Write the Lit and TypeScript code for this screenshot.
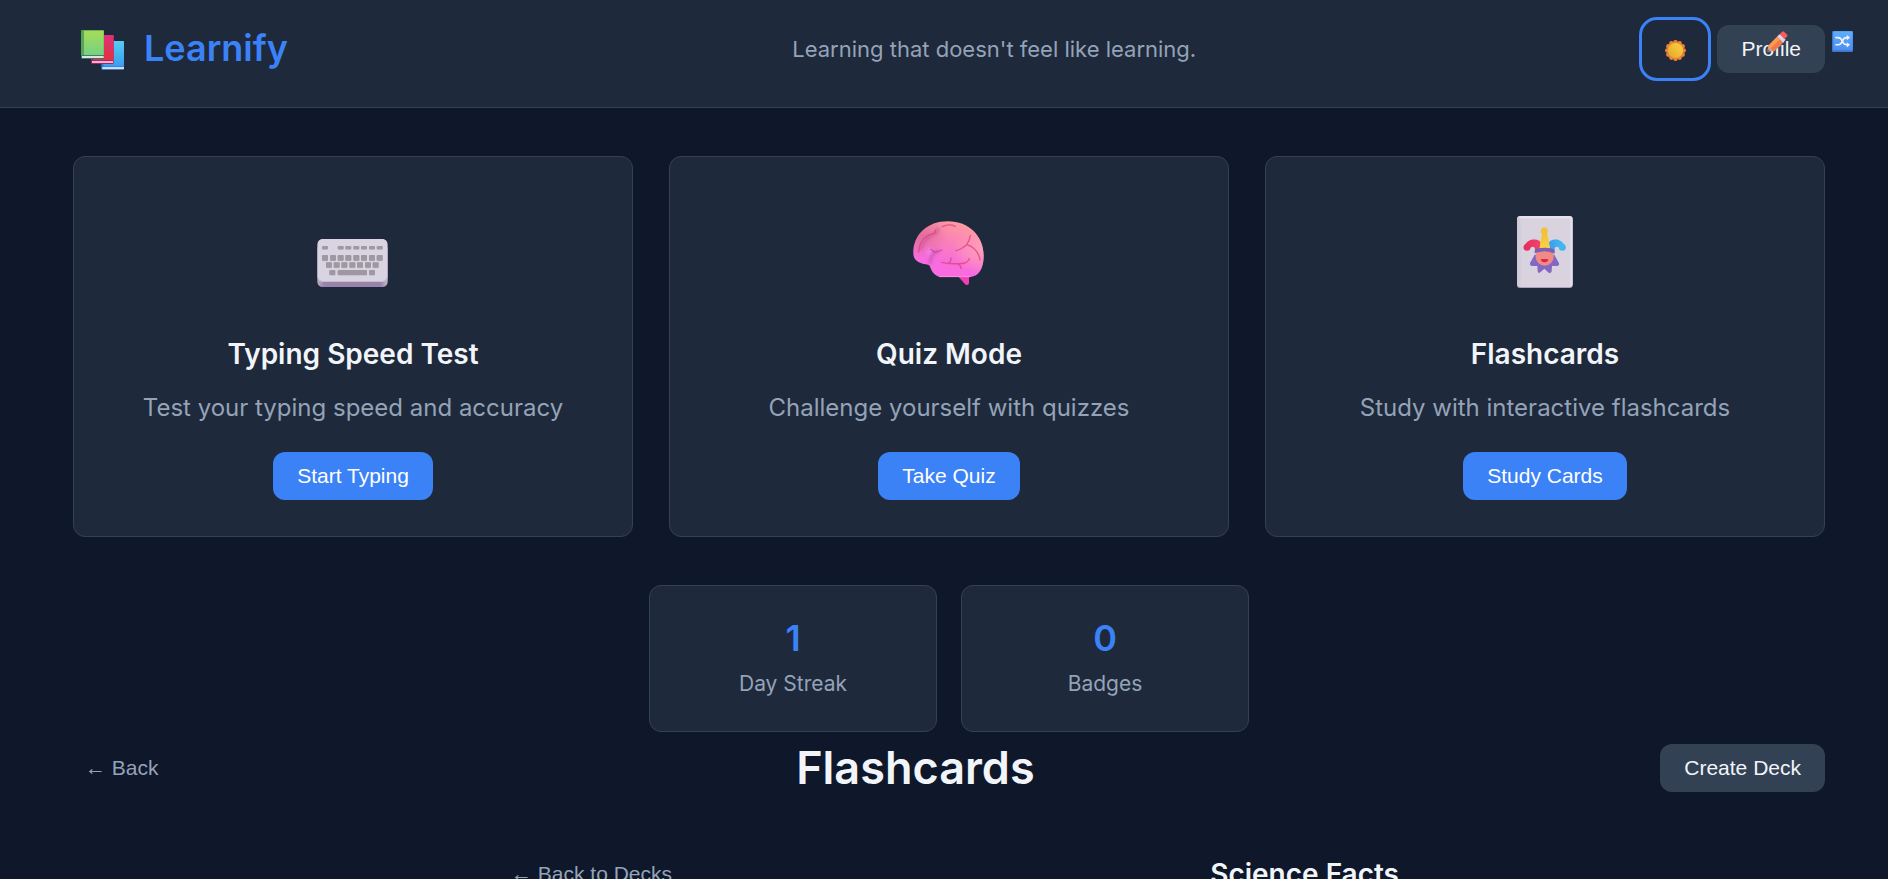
import { LitElement, html, svg, css } from "lit";
import { customElement } from "lit/decorators.js";

const booksIcon = html`
  <svg class="logo-icon" viewBox="63 81 132 132" aria-hidden="true">
    <defs>
      <linearGradient id="book-green" x1="0" y1="0" x2="0" y2="1">
        <stop offset="0" stop-color="#a6dc58" />
        <stop offset="1" stop-color="#76d184" />
      </linearGradient>
      <linearGradient id="book-red" x1="0" y1="0" x2="0" y2="1">
        <stop offset="0" stop-color="#e0307a" />
        <stop offset="1" stop-color="#e2323f" />
      </linearGradient>
      <linearGradient id="book-blue" x1="0" y1="0" x2="0" y2="1">
        <stop offset="0" stop-color="#55cdf2" />
        <stop offset="1" stop-color="#3a9df0" />
      </linearGradient>
    </defs>
    <rect x="124" y="123" width="68" height="87" rx="4" fill="#2f7fd0" />
    <path d="M131 123h58q3 0 3 3v73h-61z" fill="url(#book-blue)" />
    <rect x="127" y="201" width="65" height="6" fill="#dfd3ee" />
    <rect x="93" y="105" width="68" height="87" rx="4" fill="#a81f5e" />
    <path d="M100 105h58q3 0 3 3v73h-61z" fill="url(#book-red)" />
    <rect x="96" y="183" width="63" height="6" fill="#dcb9da" />
    <rect x="63" y="90" width="69" height="87" rx="4" fill="#2c7a60" />
    <path d="M66 90h63q3 0 3 3v73H63V93q0-3 3-3z" fill="#57a554" />
    <path d="M72 92h57q2 0 2 2v71H72z" fill="url(#book-green)" />
    <rect x="66" y="168" width="65" height="6" fill="#dfe2ea" />
  </svg>
`;

const sunPoints = Array.from({ length: 12 }, (_, i) => {
  const a = (i * Math.PI) / 6;
  return [164 + 25 * Math.cos(a), 152 + 25 * Math.sin(a)];
});

const sunIcon = html`
  <svg class="glyph" viewBox="132 120 64 64" aria-hidden="true">
    <defs>
      <linearGradient id="sun-core" x1="1" y1="0" x2="0" y2="1">
        <stop offset="0" stop-color="#ffd53c" />
        <stop offset="1" stop-color="#e0a431" />
      </linearGradient>
    </defs>
    ${sunPoints.map(([x, y]) => svg`<circle cx=${x} cy=${y} r="7" fill="#ee8336" />`)}
    <circle cx="164" cy="152" r="25" fill="#ee8336" />
    <circle cx="164" cy="152" r="23" fill="url(#sun-core)" />
  </svg>
`;

const pencilIcon = html`
  <svg class="glyph" viewBox="440 93 64 64" aria-hidden="true">
    <path d="M440 157l5-22 20 18z" fill="#c9a08f" />
    <path d="M440 157l2-9 6 6z" fill="#6b5a68" />
    <path d="M444 137l27-27 18 18-27 27q-6-1-8-7-8-2-10-11z" fill="#ff9a4a" />
    <path d="M452 145l28-27 9 10-27 27q-6-1-10-10z" fill="#f2774a" />
    <path d="M471 110l8-8 18 18-8 8z" fill="#dcd6ea" />
    <path d="M479 102l7-7q3-3 6 0l9 9q3 3 0 6l-8 8z" fill="#fb5b5b" />
  </svg>
`;

const shuffleIcon = html`
  <svg class="glyph" viewBox="636 93 64 64" aria-hidden="true">
    <defs>
      <linearGradient id="tile" x1="0" y1="0" x2="0" y2="1">
        <stop offset="0" stop-color="#5cb0fb" />
        <stop offset="1" stop-color="#4c8fee" />
      </linearGradient>
    </defs>
    <rect x="636" y="93" width="64" height="64" rx="4" fill="#3f76d2" />
    <rect x="640" y="94" width="59" height="58" rx="3" fill="url(#tile)" />
    <g fill="none" stroke="#f4f1fc" stroke-width="5" stroke-linecap="round" stroke-linejoin="round">
      <path d="M648 113h7q6 0 10 6l5 10q4 6 10 6h3" />
      <path d="M648 135h7q6 0 10-6l5-10q4-6 10-6h3" />
    </g>
    <path d="M681 105l10 8-10 8zM681 127l10 8-10 8z" fill="#f4f1fc" />
  </svg>
`;

const keys = (y: number, h: number, xs: number[], w = 18) =>
  xs.map(
    (x) => svg`
      <rect x=${x} y=${y} width=${w} height=${h + 2} rx="3" fill="#c3bcc8" />
      <rect x=${x} y=${y} width=${w} height=${h} rx="3" fill="#9d98a1" />`
  );

const keyboardIcon = html`
  <svg class="card-icon" viewBox="54 -51 270 345" aria-hidden="true">
    <defs>
      <linearGradient id="kb-base" x1="0" x2="1">
        <stop offset="0" stop-color="#b9adc4" />
        <stop offset="0.1" stop-color="#9884ab" />
        <stop offset="0.9" stop-color="#9884ab" />
        <stop offset="1" stop-color="#c4bbcc" />
      </linearGradient>
    </defs>
    <rect x="82" y="100" width="211" height="131" rx="16" fill="url(#kb-base)" />
    <rect x="82" y="87" width="211" height="129" rx="16" fill="#c6bdd0" />
    <rect x="84" y="87" width="207" height="126" rx="15" fill="#dad3e1" />
    ${keys(108, 10, [96, 143, 166, 190, 213, 237, 260])}
    ${keys(135, 17, [96, 120, 143, 166, 190, 213, 237, 260])}
    ${keys(157, 16, [108, 131, 154, 178, 201, 225, 248])}
    ${keys(180, 15, [118, 237])} ${keys(180, 15, [143], 88)}
  </svg>
`;

const brainIcon = html`
  <svg class="card-icon" viewBox="42 -21 270 345" aria-hidden="true">
    <defs>
      <linearGradient id="brain-fill" x1="0.75" y1="0" x2="0.4" y2="1">
        <stop offset="0" stop-color="#ff9f9c" />
        <stop offset="0.35" stop-color="#fb84b4" />
        <stop offset="0.75" stop-color="#f76cdc" />
        <stop offset="1" stop-color="#fb6ae2" />
      </linearGradient>
      <radialGradient id="brain-shade" cx="0.1" cy="0.25" r="0.4">
        <stop offset="0" stop-color="#d25f82" stop-opacity="0.6" />
        <stop offset="1" stop-color="#d25f82" stop-opacity="0" />
      </radialGradient>
      <radialGradient id="brain-light" cx="1" cy="0.5" r="0.45">
        <stop offset="0" stop-color="#ffa0bd" />
        <stop offset="1" stop-color="#ffa0bd" stop-opacity="0" />
      </radialGradient>
      <filter id="soft" x="-30%" y="-30%" width="160%" height="160%">
        <feGaussianBlur stdDeviation="4" />
      </filter>
    </defs>
    <path d="M204 229h33v20q0 6-6 6-4 0-7-4z" fill="#f43fb4" />
    ${["brain-fill", "brain-shade", "brain-light"].map(
      (fill) => svg`
        <path
          d="M70 159C70 104 112 64 174 64C237 64 281 108 281 168C281 206 266 231 238 231H156C137 231 126 218 119 197C113 192 104 194 94 190C78 184 70 175 70 159Z"
          fill="url(#${fill})"
        />`
    )}
    <g fill="none" stroke-linecap="round" filter="url(#soft)">
      <path d="M92 148q7-36 45-48q7-5 6-14" stroke="#b94f93" stroke-width="9" opacity="0.55" />
      <path d="M120 188q2-26 24-34" stroke="#bd4fa6" stroke-width="10" opacity="0.6" />
      <path d="M115 160q0-8 5-12" stroke="#ea8cff" stroke-width="9" opacity="0.8" />
    </g>
    <g fill="none" stroke="#e2497f" stroke-width="4" stroke-linecap="round" opacity="0.85">
      <path d="M86 156C88 125 105 105 131 101Q138 97 135 90" />
      <path d="M157 80Q176 70 196 79" />
      <path d="M241 106Q238 124 230 134Q212 149 197 152M230 134Q264 144 270 180" />
      <path d="M122 148Q130 150 132 157M130 155Q142 157 156 150" stroke="#d0469c" />
      <path d="M155 187Q172 192 200 191Q232 193 238 176M183 174Q184 184 176 189M205 192Q214 198 213 206" />
    </g>
    <path d="M148 230H242" stroke="#ffa3e8" stroke-width="2" />
  </svg>
`;

const jokerIcon = html`
  <svg class="card-icon" viewBox="30 -21 270 345" aria-hidden="true">
    <defs>
      <linearGradient id="hat-red" x1="0" x2="1">
        <stop offset="0" stop-color="#e8305f" />
        <stop offset="1" stop-color="#f0456c" />
      </linearGradient>
      <linearGradient id="hat-blue" x1="0" x2="1">
        <stop offset="0" stop-color="#3f9be6" />
        <stop offset="1" stop-color="#43bdf5" />
      </linearGradient>
      <linearGradient id="hat-yellow" x1="0" y1="0" x2="0" y2="1">
        <stop offset="0" stop-color="#f2bd32" />
        <stop offset="1" stop-color="#fbd648" />
      </linearGradient>
      <linearGradient id="card-face" x1="0" x2="1">
        <stop offset="0" stop-color="#cdc8d4" />
        <stop offset="0.1" stop-color="#d9d3e0" />
        <stop offset="0.94" stop-color="#d9d3e0" />
        <stop offset="1" stop-color="#ece7f1" />
      </linearGradient>
    </defs>
    <rect x="81" y="49" width="167" height="215" rx="9" fill="#b19fbf" />
    <rect x="81" y="48" width="167" height="213" rx="9" fill="url(#card-face)" />
    <rect x="87" y="49" width="155" height="6" rx="3" fill="#e8e3ed" />
    <path
      d="M134 164L120 189Q119 198 127 198H142L143 214Q145 222 151 217L163 206L176 218Q183 222 185 214L186 198H200Q209 198 207 190L193 164Z"
      fill="#8467c0"
    />
    <path d="M105 136C110 121 128 116 143 120Q152 123 153 130L147 154H135Q137 132 117 145Z" fill="url(#hat-red)" />
    <circle cx="111" cy="142" r="10.500" fill="#e5325f" />
    <path d="M223 136C218 121 200 116 187 120Q177 123 177 130L181 154H194Q192 132 211 145Z" fill="url(#hat-blue)" />
    <circle cx="217" cy="142" r="10.500" fill="#41b6f3" />
    <path d="M158 97H170Q177 120 180 150H148Q151 120 158 97Z" fill="url(#hat-yellow)" />
    <circle cx="163" cy="93" r="10.500" fill="#f3c136" />
    <circle cx="164" cy="170" r="27" fill="#ef8a86" />
    <path d="M134 160V151Q134 144 164 143Q193 144 194 151V161Q180 155 164 154Q147 155 134 160Z" fill="#7d5fb5" />
    <path d="M152 178Q163 176 175 178Q174 187 164 187Q154 187 152 178Z" fill="#dc2347" />
  </svg>
`;

const modes = [
  { icon: keyboardIcon, title: "Typing Speed Test", text: "Test your typing speed and accuracy", action: "Start Typing" },
  { icon: brainIcon, title: "Quiz Mode", text: "Challenge yourself with quizzes", action: "Take Quiz" },
  { icon: jokerIcon, title: "Flashcards", text: "Study with interactive flashcards", action: "Study Cards" },
];

const stats = [
  { value: 1, label: "Day Streak" },
  { value: 0, label: "Badges" },
];

@customElement("app-root")
export class AppRoot extends LitElement {
  static styles = css`
    :host {
      display: block;
      height: 100vh;
      overflow: hidden;
      background: #0f172a;
      color: #f1f5f9;
      font-family: Inter, "Noto Sans", sans-serif;
      font-size: 24px;
    }
    * {
      box-sizing: border-box;
    }
    h1,
    h2,
    p {
      margin: 0;
      font-weight: 400;
    }
    button {
      font: 21px/24px "Liberation Sans", Arial, sans-serif;
      border: none;
      border-radius: 12px;
      padding: 12px 24px;
      color: #f1f5f9;
      background: #334155;
      white-space: nowrap;
      cursor: pointer;
    }
    .primary {
      color: #ffffff;
      background: #3b82f6;
    }
    .link {
      padding: 12px;
      color: #94a3b8;
      background: none;
    }
    .arrow {
      font-family: "Liberation Serif", serif;
      line-height: 1;
    }
    .header {
      display: flex;
      align-items: center;
      justify-content: space-between;
      padding: 17px 63px 26px 73px;
      background: #1e293b;
      border-bottom: 1px solid #334155;
    }
    .logo {
      display: flex;
      align-items: center;
      gap: 19px;
      min-width: 276px;
      padding-left: 8px;
      color: #3b82f6;
      font-size: 36px;
      font-weight: 600;
      line-height: 58px;
      text-decoration: none;
    }
    .logo-name {
      padding-bottom: 2px;
    }
    .logo-icon {
      width: 44px;
      height: 44px;
    }
    .tagline {
      color: #94a3b8;
      font-size: 22px;
      line-height: 34px;
    }
    .actions {
      position: relative;
      display: flex;
      align-items: center;
      gap: 6px;
    }
    .theme {
      display: flex;
      align-items: center;
      justify-content: center;
      width: 72px;
      height: 64px;
      padding: 3px 0 0;
      border: 3px solid #3b82f6;
      border-radius: 18px;
      background: none;
    }
    .glyph {
      display: block;
      width: 21px;
      height: 21px;
    }
    .badge {
      position: absolute;
      top: 14px;
    }
    .edit {
      right: 37px;
      pointer-events: none;
    }
    .shuffle {
      right: -28px;
      padding: 0;
      border-radius: 2px;
      background: none;
    }
    .main {
      padding: 48px 63px 0 73px;
    }
    .cards {
      display: grid;
      grid-template-columns: repeat(3, 1fr);
      gap: 36px;
    }
    .card {
      display: flex;
      flex-direction: column;
      align-items: center;
      padding: 36px;
      background: #1e293b;
      border: 1px solid #334155;
      border-radius: 12px;
      text-align: center;
    }
    .card-icon {
      width: 90px;
      height: 115px;
      margin-bottom: 24px;
    }
    .card-title {
      margin-bottom: 12px;
      font-size: 28px;
      font-weight: 600;
      line-height: 45px;
    }
    .card-text {
      margin-bottom: 26px;
      color: #94a3b8;
      line-height: 37px;
    }
    .stats {
      display: grid;
      grid-template-columns: repeat(2, 1fr);
      gap: 24px;
      max-width: 600px;
      margin: 48px auto 0;
    }
    .stat {
      padding: 24px 24px 30px;
      background: #1e293b;
      border: 1px solid #334155;
      border-radius: 12px;
      text-align: center;
    }
    .stat-value {
      color: #3b82f6;
      font-size: 36px;
      font-weight: 600;
      line-height: 56px;
    }
    .stat-label {
      color: #94a3b8;
      font-size: 21px;
      line-height: 35px;
    }
    .bar {
      display: flex;
      align-items: center;
      justify-content: space-between;
    }
    .page-title {
      font-size: 45px;
      font-weight: 600;
      line-height: 72px;
    }
    .study {
      max-width: 900px;
      margin: 46px auto 0;
    }
    .study .card-title {
      margin: 0;
    }
  `;

  render() {
    return html`
      <header class="header">
        <a class="logo" href="#">${booksIcon}<span class="logo-name">Learnify</span></a>
        <p class="tagline">Learning that doesn't feel like learning.</p>
        <div class="actions">
          <button class="theme" aria-label="Toggle theme">${sunIcon}</button>
          <button>Profile</button>
          <span class="badge edit">${pencilIcon}</span>
          <button class="badge shuffle" aria-label="Shuffle">${shuffleIcon}</button>
        </div>
      </header>
      <main class="main">
        <section class="cards">
          ${modes.map(
            (m) => html`
              <article class="card">
                ${m.icon}
                <h2 class="card-title">${m.title}</h2>
                <p class="card-text">${m.text}</p>
                <button class="primary">${m.action}</button>
              </article>
            `
          )}
        </section>
        <section class="stats">
          ${stats.map(
            (s) => html`
              <div class="stat">
                <div class="stat-value">${s.value}</div>
                <div class="stat-label">${s.label}</div>
              </div>
            `
          )}
        </section>
        <section>
          <div class="bar">
            <button class="link"><span class="arrow">←</span> Back</button>
            <h1 class="page-title">Flashcards</h1>
            <button>Create Deck</button>
          </div>
          <div class="bar study">
            <button class="link"><span class="arrow">←</span> Back to Decks</button>
            <h2 class="card-title">Science Facts</h2>
          </div>
        </section>
      </main>
    `;
  }
}
